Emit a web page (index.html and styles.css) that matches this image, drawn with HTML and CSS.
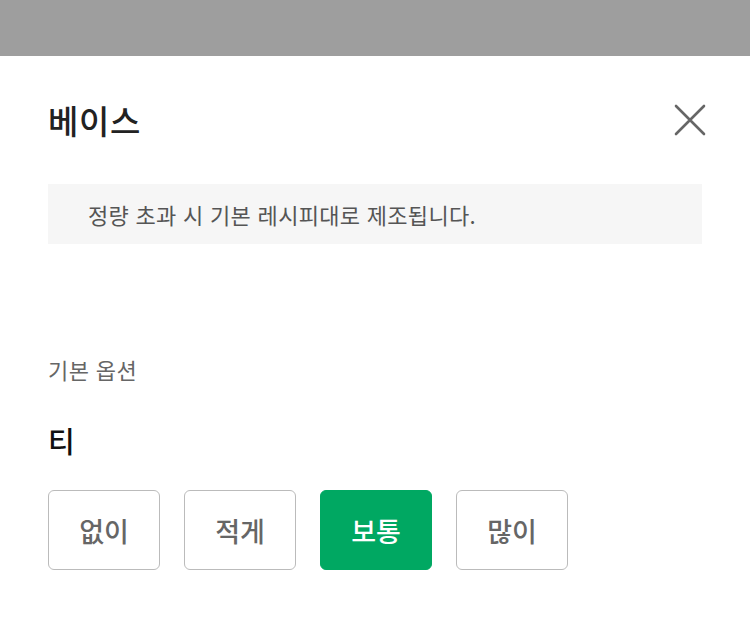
FILE: index.html
```html
<!DOCTYPE html>
<html lang="ko">
<head>
<meta charset="utf-8">
<link rel="stylesheet" href="styles.css">
</head>
<body>
<div class="dim"></div>
<div class="sheet">
  <div class="header">
    <h1 class="title">베이스</h1>
    <button class="close" aria-label="닫기">
      <svg width="32" height="32" viewBox="0 0 32 32"><path d="M2 2 L30 30 M30 2 L2 30" stroke="#666" stroke-width="2.6" stroke-linecap="round"/></svg>
    </button>
  </div>
  <div class="notice">정량 초과 시 기본 레시피대로 제조됩니다.</div>
  <div class="section-label">기본 옵션</div>
  <div class="option-name">티</div>
  <div class="choices">
    <button class="choice">없이</button>
    <button class="choice">적게</button>
    <button class="choice active">보통</button>
    <button class="choice">많이</button>
  </div>
</div>
</body>
</html>
```

FILE: styles.css
```css
html, body {
  margin: 0;
  padding: 0;
  background: #fff;
  font-family: "Noto Sans CJK KR", "Noto Sans", sans-serif;
}
.dim {
  height: 56px;
  background: #9e9e9e;
}
.sheet {
  padding: 0 48px;
}
.header {
  display: flex;
  align-items: center;
  justify-content: space-between;
  height: 128px;
}
.title {
  margin: 0;
  font-size: 33px;
  font-weight: 500;
  letter-spacing: 0.6px;
  color: #222;
  line-height: 1;
}
.close {
  border: 0;
  background: none;
  padding: 0;
  margin-right: -4px;
  width: 32px;
  height: 32px;
  display: flex;
}
.notice {
  background: #f6f6f6;
  height: 60px;
  display: flex;
  align-items: center;
  padding-left: 40px;
  font-size: 22px;
  letter-spacing: 0.3px;
  color: #555;
}
.section-label {
  margin-top: 110px;
  font-size: 22px;
  letter-spacing: 0.4px;
  color: #666;
  line-height: 30px;
}
.option-name {
  margin-top: 38px;
  font-size: 29px;
  font-weight: 500;
  color: #111;
  line-height: 36px;
}
.choices {
  display: flex;
  gap: 24px;
  margin-top: 32px;
}
.choice {
  width: 112px;
  height: 80px;
  border: 1px solid #bbb;
  border-radius: 6px;
  background: #fff;
  font-family: inherit;
  font-size: 27px;
  font-weight: 500;
  color: #666;
  padding: 0;
}
.choice.active {
  background: #00a862;
  border-color: #00a862;
  color: #fff;
}
```
